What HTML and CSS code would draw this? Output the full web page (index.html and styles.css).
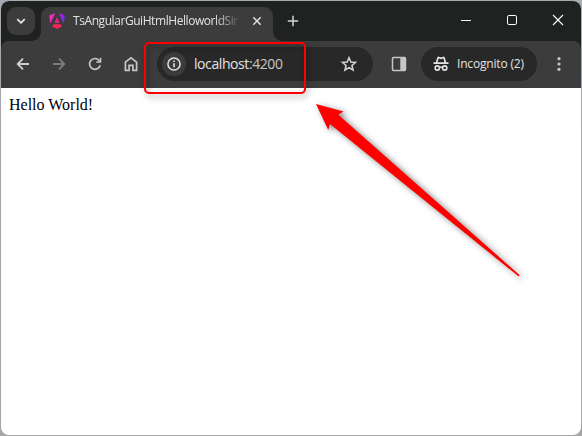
FILE: index.html
```html
<!DOCTYPE html>
<html lang="en">
<head>
<meta charset="utf-8">
<title>TsAngularGuiHtmlHelloworldSimple</title>
<link rel="stylesheet" href="styles.css">
</head>
<body>
<div class="window">
  <header class="tabstrip">
    <button class="tab-search" aria-label="Search tabs"><svg width="12" height="12" viewBox="0 0 12 12"><path d="M2.3 4.2 6 7.9l3.700-3.700" fill="none" stroke="#e8e8e8" stroke-width="1.7"/></svg></button>
    <div class="tab">
      <svg class="logo" width="16" height="16" viewBox="0 0 16 16">
        <defs><linearGradient id="right" x1="0" y1="0" x2="1" y2="0"><stop offset="0" stop-color="#c21cf0"/><stop offset="1" stop-color="#7a22ff"/></linearGradient></defs>
        <path d="M6.200 0 1.200 10.800.300 2.400z" fill="#f52bc0"/>
        <path d="m9.800 0 5 10.800.900-8.400z" fill="url(#right)"/>
        <path d="m8 4 2.500 6H5.500z" fill="#e81f86"/>
        <path d="M4.200 11.200h7.600l.8 2.200L8 16l-4.600-2.600z" fill="#fa2456"/>
      </svg>
      <span class="tab-title">TsAngularGuiHtmlHelloworldSir</span>
      <svg class="tab-close" width="10" height="10" viewBox="0 0 10 10"><path d="m1.300 1.300 7.400 7.400m0-7.400L1.300 8.700" stroke="#e3e3e3" stroke-width="1.500"/></svg>
    </div>
    <svg class="new-tab" width="12" height="12" viewBox="0 0 12 12"><path d="M6 .8v10.400M.8 6h10.400" stroke="#d4d4d4" stroke-width="1.500"/></svg>
    <div class="controls">
      <svg width="12" height="12" viewBox="0 0 12 12"><path d="M1 6.500h10" stroke="#fff"/></svg>
      <svg width="12" height="12" viewBox="0 0 12 12"><rect x="1.500" y="1.500" width="9" height="9" rx="1.300" fill="none" stroke="#fff"/></svg>
      <svg width="12" height="12" viewBox="0 0 12 12"><path d="m1 1 10 10M11 1 1 11" stroke="#fff" stroke-width="1.100"/></svg>
    </div>
  </header>
  <nav class="toolbar">
    <div class="nav-icons">
      <svg width="16" height="16" viewBox="0 0 16 16"><path d="M14 8H3M8 2.700 2.700 8 8 13.300" fill="none" stroke="#d0d0d0" stroke-width="1.800"/></svg>
      <svg width="16" height="16" viewBox="0 0 16 16"><path d="M2 8h11M8 2.700 13.300 8 8 13.300" fill="none" stroke="#7d7d7d" stroke-width="1.800"/></svg>
      <svg width="16" height="16" viewBox="0 0 16 16"><path d="M13.200 9.200A5.400 5.400 0 1 1 12 4.300L13.600 6" fill="none" stroke="#c7c7c7" stroke-width="1.700"/><path d="M14.300 1.800v5H9.300V5.300h3.500V1.800z" fill="#c7c7c7"/></svg>
      <svg width="16" height="16" viewBox="0 0 16 16"><path d="M2.400 14.300V6.100L8 1.800l5.600 4.300v8.200H9.900V9.300H6.100v5z" fill="none" stroke="#c7c7c7" stroke-width="1.700"/></svg>
    </div>
    <div class="address">
      <span class="site-info"><svg width="16" height="16" viewBox="0 0 16 16"><circle cx="8" cy="8" r="6.100" fill="none" stroke="#e3e3e3" stroke-width="1.500"/><path d="M8 7.200v4M8 4.500v1.600" stroke="#e3e3e3" stroke-width="1.600"/></svg></span>
      <span class="url">localhost<span class="port">:4200</span></span>
      <svg class="star" width="18" height="18" viewBox="0 0 18 18"><path d="m9 2.700 1.850 4.250 4.650.4-3.500 3.100 1.050 4.550L9 12.600 4.950 15 6 10.450 2.500 7.350l4.650-.4z" fill="none" stroke="#d0d0d0" stroke-width="1.600"/></svg>
    </div>
    <svg class="panel" width="16" height="16" viewBox="0 0 16 16"><rect x="1.500" y="1.500" width="13" height="13" rx="1" fill="none" stroke="#c7c7c7" stroke-width="1.500"/><path d="M9.300 1.500h5.200v13H9.300z" fill="#c7c7c7"/></svg>
    <div class="incognito">
      <svg width="16" height="16" viewBox="0 0 16 16"><path d="M.5 7.100h15M3.600 6.700l1.300-4.800c.1-.5.500-.6.900-.4l2.200.8 2.200-.8c.4-.2.800-.1.900.4l1.300 4.800" fill="none" stroke="#e3e3e3" stroke-width="1.700"/><g fill="none" stroke="#e3e3e3" stroke-width="1.600"><circle cx="4.300" cy="12" r="2.150"/><circle cx="11.700" cy="12" r="2.150"/><path d="M6.400 11.500q1.600-.9 3.200 0"/></g></svg>
      <span>Incognito (2)</span>
    </div>
    <svg class="more" width="4" height="16" viewBox="0 0 4 16"><g fill="#c7c7c7"><circle cx="2" cy="2.700" r="1.600"/><circle cx="2" cy="8" r="1.600"/><circle cx="2" cy="13.300" r="1.600"/></g></svg>
  </nav>
  <main class="page">Hello World!</main>
</div>
<div class="highlight"></div>
<svg class="arrow" width="230" height="200" viewBox="0 0 230 200"><path d="m16 14 27.500 7.500-5.200 3.200L219.500 185l-.8 1.500L30 34l-1.700 6z" fill="red"/></svg>
</body>
</html>
```
FILE: styles.css
```css
* { box-sizing: border-box; }
body { margin: 0; width: 582px; height: 436px; padding: 1px; overflow: hidden; position: relative; background: linear-gradient(#a5abb2, #a6a6a6 30%); font-family: "Open Sans", "Noto Sans", sans-serif; }
svg { display: block; flex: none; }
.window { width: 580px; height: 434px; display: flex; flex-direction: column; border-radius: 8px; overflow: hidden; background: #fff; }
.tabstrip { height: 40px; flex: none; background: #1f2221; display: flex; align-items: flex-end; z-index: 1; }
.tab-search { width: 28px; height: 28px; margin: 0 6px 6px; padding: 0; border: 0; border-radius: 9px; background: #3c3c3c; display: flex; align-items: center; justify-content: center; }
.tab { position: relative; width: 232px; height: 34px; padding: 0 11px 6px 8px; border-radius: 9px 9px 0 0; background: #3c3c3c; display: flex; align-items: center; }
.tab::before, .tab::after { content: ""; position: absolute; bottom: 0; width: 9px; height: 9px; }
.tab::before { left: -9px; background: radial-gradient(circle at 0 0, transparent 8.500px, #3c3c3c 9px); }
.tab::after { right: -9px; background: radial-gradient(circle at 100% 0, transparent 8.500px, #3c3c3c 9px); }
.tab-title { width: 169px; margin-left: 8px; overflow: hidden; white-space: nowrap; font-size: 12px; line-height: 18px; letter-spacing: -.43px; color: #e3e3e3; -webkit-mask-image: linear-gradient(90deg, #000 84%, transparent); mask-image: linear-gradient(90deg, #000 84%, transparent); }
.tab-close { margin-left: auto; }
.new-tab { margin: 0 0 14px 14px; }
.controls { width: 104px; margin: 0 17px 15px auto; display: flex; justify-content: space-between; }
.toolbar { height: 47px; flex: none; padding: 0 20px 1px 14px; background: #3c3c3c; border-radius: 8px 8px 0 0; box-shadow: 0 -8px 0 #1f2221; display: flex; align-items: center; }
.nav-icons { display: flex; gap: 20px; }
.address { width: 216px; height: 34px; margin-left: 18px; padding: 0 15px 0 5px; background: #282828; border-radius: 17px; display: flex; align-items: center; }
.site-info { width: 24px; height: 24px; border-radius: 12px; background: #3c3c3c; display: flex; align-items: center; justify-content: center; }
.url { margin-left: 8px; font-size: 14px; line-height: 20px; letter-spacing: -.42px; color: #e3e3e3; }
.port { color: #c7c7c7; }
.star { margin-left: auto; }
.panel { margin-left: 18px; }
.incognito { width: 116px; height: 34px; margin-left: 14px; padding-left: 12px; background: #282828; border-radius: 17px; display: flex; align-items: center; gap: 8px; font-size: 12px; line-height: 18px; letter-spacing: -.18px; white-space: nowrap; color: #e3e3e3; }
.more { margin-left: auto; }
.page { flex: 1; padding: 8px; font: 16px/18px "Liberation Serif", serif; color: #000; }
.highlight { position: absolute; left: 144px; top: 42px; width: 162px; height: 52px; border: 2px solid red; border-radius: 5px; filter: drop-shadow(2px 3px 3px rgba(0, 0, 0, .4)); }
.arrow { position: absolute; left: 300px; top: 90px; filter: drop-shadow(3px 2px 3px rgba(0, 0, 0, .5)); }
```
